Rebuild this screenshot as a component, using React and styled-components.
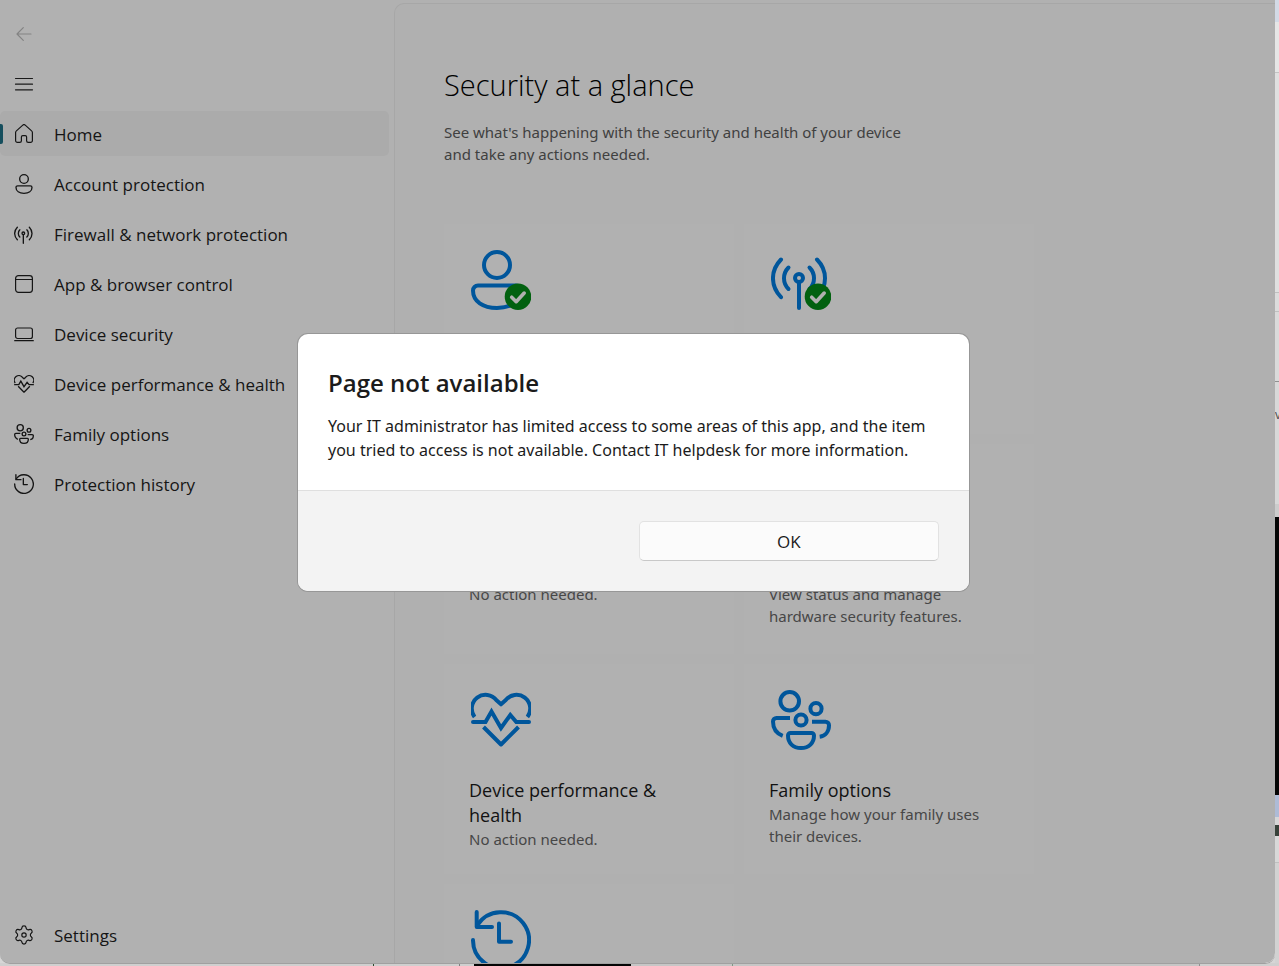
import React from "react";
import styled, { createGlobalStyle } from "styled-components";

const GlobalStyle = createGlobalStyle`
  * {
    box-sizing: border-box;
  }

  body {
    margin: 0;
    font-family: "Open Sans", "Noto Sans", sans-serif;
    color: #1b1b1b;
  }

  h1, h2, h3, p, ul {
    margin: 0;
    padding: 0;
  }
`;

const Desktop = styled.div`
  height: 100vh;
  display: grid;
  grid-template-columns: minmax(0, 1fr) 4px;
  grid-template-rows: minmax(0, 1fr) 3px;
  background: #d6d6d6;
  overflow: hidden;
`;

const AppWindow = styled.div`
  position: relative;
  display: grid;
  grid-template-columns: 394px minmax(0, 1fr);
  background: #fefefe;
  border-radius: 0 0 10px 10px;
  box-shadow: 0 1px 0 #a0a0a0;
  overflow: hidden;
`;

const EdgeColumn = styled.div`
  display: flex;
  flex-direction: column;
  overflow: hidden;
`;

const EdgeRow = styled.div`
  grid-column: 1 / -1;
  display: flex;
  overflow: hidden;
`;

const EdgePart = styled.div`
  flex: ${props => props.$size} 1 0;
  min-width: 0;
  min-height: 0;
  overflow: hidden;
  background: ${props => props.$color};
  color: #4a4a4a;
  font-size: 12px;
  line-height: 14px;
`;

const Sidebar = styled.nav`
  display: flex;
  flex-direction: column;
  gap: 5px;
  padding: 11px 5px 6px 0;
`;

const NavList = styled.ul`
  display: flex;
  flex-direction: column;
  gap: 5px;
  list-style: none;
`;

const Spacer = styled.div`
  flex: 1;
`;

const IconButton = styled.button`
  display: flex;
  align-items: center;
  width: 48px;
  height: 45px;
  padding: 0 14px;
  border: 0;
  background: none;
  color: ${props => (props.disabled ? "#bcbcbc" : "#262626")};
`;

const NavLink = styled.a`
  display: flex;
  align-items: center;
  gap: 20px;
  height: 45px;
  padding-left: ${props => (props.$active ? 0 : 14)}px;
  border-radius: 5px;
  background: ${props => (props.$active ? "#f5f5f5" : "none")};
  color: #1f1f1f;
  font-size: 17px;
  line-height: 24px;
  text-decoration: none;

  &::before {
    content: "";
    display: ${props => (props.$active ? "block" : "none")};
    width: 3px;
    height: 20px;
    margin-right: -9px;
    border-radius: 0 2px 2px 0;
    background: #1f7086;
  }
`;

const NavLabel = styled.span`
  padding-top: 2px;
`;

const Main = styled.main`
  margin-top: 3px;
  padding: 61px 49px 0;
  border: 1px solid #efefef;
  border-width: 1px 0 0 1px;
  border-top-left-radius: 10px;
  background: #fcfcfc;
  overflow: hidden;
`;

const PageTitle = styled.h1`
  color: #000;
  font-size: 29px;
  font-weight: 300;
  line-height: 40px;
`;

const PageIntro = styled.p`
  max-width: 480px;
  margin-top: 16px;
  color: #5c5c5c;
  font-family: "Noto Sans", sans-serif;
  font-size: 15px;
  line-height: 22px;
`;

const TileGrid = styled.div`
  display: grid;
  grid-template-columns: repeat(2, 290px);
  grid-auto-rows: 210px;
  gap: 10px;
  margin-top: 59px;
`;

const Tile = styled.section`
  padding: 24px 25px;
  background: #fefefe;
`;

const TileIcon = styled.div`
  height: 90px;
  padding: 2px;
  color: #007bdf;
`;

const TileTitle = styled.h2`
  font-size: 18px;
  font-weight: 400;
  line-height: 25px;
`;

const TileText = styled.p`
  color: #666;
  font-family: "Noto Sans", sans-serif;
  font-size: 15px;
  line-height: 22px;
`;

const Overlay = styled.div`
  position: absolute;
  inset: 0;
  display: flex;
  align-items: center;
  justify-content: center;
  padding: 0 8px 38px 0;
  background: rgba(0, 0, 0, 0.3);
`;

const Dialog = styled.div`
  width: 671px;
  border-radius: 10px;
  background: #fff;
  box-shadow: 0 0 0 1px #979797;
  overflow: hidden;
`;

const DialogBody = styled.div`
  padding: 32px 30px 28px;
`;

const DialogTitle = styled.h2`
  font-size: 24px;
  font-weight: 600;
  line-height: 34px;
`;

const DialogText = styled.p`
  margin-top: 14px;
  font-family: "Noto Sans", sans-serif;
  font-size: 16px;
  line-height: 24px;
`;

const DialogFooter = styled.div`
  display: grid;
  grid-template-columns: 1fr 1fr;
  gap: 10px;
  padding: 30px;
  border-top: 1px solid #dfdfdf;
  background: #f3f3f3;
`;

const OkButton = styled.button`
  grid-column: 2;
  height: 40px;
  border: 1px solid #e2e2e2;
  border-bottom-color: #c8c8c8;
  border-radius: 5px;
  background: #fbfbfb;
  color: #1b1b1b;
  font-family: inherit;
  font-size: 17px;
`;

const Drawing = ({ size, viewBox = "0 0 60 60", width = 4, children }) => (
  <svg
    width={size}
    height={size}
    viewBox={viewBox}
    fill="none"
    stroke="currentColor"
    strokeWidth={width}
    strokeLinecap="round"
    strokeLinejoin="round"
    aria-hidden="true"
  >
    {children}
  </svg>
);

const Badge = () => (
  <g>
    <circle cx="47" cy="46.7" r="13.3" fill="#048c17" stroke="none" />
    <path d="M40.7 47.2l4.5 4.5 8-8.6" stroke="#fdfdfd" strokeWidth="3.6" />
  </g>
);

const AccountIcon = ({ size, badge }) => (
  <Drawing size={size} viewBox={badge ? "0 0 60 60" : "-4 0 60 60"}>
    <circle cx="26" cy="15" r="13" />
    <path d="M7 35.5h38a5 5 0 0 1 5 5C50 51.5 40 58 26 58S2 51.5 2 40.5a5 5 0 0 1 5-5z" />
    {badge && <Badge />}
  </Drawing>
);

const NetworkIcon = ({ size, badge }) => (
  <Drawing size={size}>
    <circle cx="28" cy="28" r="4" />
    <path d="M28 33v25" />
    <path d="M10 9.5C-.7 20.5-.7 36 10 47.2M46 9.5C56.7 20.5 56.7 36 46 47.2" />
    <path d="M17.5 17.5c-6 6-6 15.5 0 21.5M38.5 17.5c6 6 6 15.5 0 21.5" />
    {badge && <Badge />}
  </Drawing>
);

const HeartIcon = ({ size }) => (
  <Drawing size={size} viewBox="0 -1 60 60">
    <path
      d="M3.6 26A13.7 13.7 0 0 1 25.5 9.3L30 13.3l4.5-4A13.7 13.7 0 0 1 56.4 26"
      strokeLinecap="butt"
    />
    <path d="M2 31h12.5l6-10.5L30 37l9.3-13 6 7H58" strokeLinejoin="miter" />
    <path d="M12.5 36L30 53.5 47.5 36" strokeLinecap="butt" />
  </Drawing>
);

const FamilyIcon = ({ size }) => (
  <Drawing size={size}>
    <circle cx="18.7" cy="11.3" r="9.3" />
    <circle cx="45" cy="18.7" r="5.6" />
    <circle cx="30" cy="30" r="5.6" />
    <path d="M19.5 43h21a2.5 2.5 0 0 1 2.5 2.5C43 53 38 58 30 58s-13-5-13-12.5a2.5 2.5 0 0 1 2.5-2.5z" />
    <path
      d="M19 28H5.5A3.5 3.5 0 0 0 2 31.5c0 6.5 3.5 12 9.7 14.3M41 31.7h13.5a3.5 3.5 0 0 1 3.5 3.5c0 6.3-3.5 10.8-9.3 11.5"
      strokeLinecap="butt"
    />
  </Drawing>
);

const HistoryIcon = ({ size }) => (
  <Drawing size={size}>
    <path d="M2 30A28 28 0 1 0 6.5 15" />
    <path d="M5.7 2v15H21" />
    <path d="M28 13.5v18.2h12" />
  </Drawing>
);

const HomeIcon = ({ size }) => (
  <Drawing size={size} viewBox="0 0 20 20" width={1.2}>
    <path d="M8.8 1.1L2.4 6.9a2.2 2.2 0 0 0-.8 1.7v8a1.8 1.8 0 0 0 1.8 1.8h2.4a1.6 1.6 0 0 0 1.6-1.6V13a1.4 1.4 0 0 1 1.4-1.4h2.4a1.4 1.4 0 0 1 1.4 1.4v3.8a1.6 1.6 0 0 0 1.6 1.6h2.4a1.8 1.8 0 0 0 1.8-1.8v-8a2.2 2.2 0 0 0-.8-1.7L11.2 1.1a1.8 1.8 0 0 0-2.4 0z" />
  </Drawing>
);

const BrowserIcon = ({ size }) => (
  <Drawing size={size} viewBox="0 0 20 20" width={1.2}>
    <rect x="1.6" y="1.6" width="16.8" height="16.8" rx="2.8" />
    <path d="M1.6 5.5h16.8" />
  </Drawing>
);

const LaptopIcon = ({ size }) => (
  <Drawing size={size} viewBox="0 0 20 20" width={1.2}>
    <rect x="1.6" y="4" width="16.8" height="10.5" rx="2" />
    <path d="M.7 16.7h18.6" />
  </Drawing>
);

const SettingsIcon = ({ size }) => (
  <Drawing size={size} viewBox="1 1 22 22" width={1.3}>
    <path d="M9.671 4.136a2.34 2.34 0 0 1 4.659 0 2.34 2.34 0 0 0 3.319 1.915 2.34 2.34 0 0 1 2.33 4.033 2.34 2.34 0 0 0 0 3.831 2.34 2.34 0 0 1-2.33 4.033 2.34 2.34 0 0 0-3.319 1.915 2.34 2.34 0 0 1-4.659 0 2.34 2.34 0 0 0-3.32-1.915 2.34 2.34 0 0 1-2.33-4.033 2.34 2.34 0 0 0 0-3.831A2.34 2.34 0 0 1 6.35 6.051a2.34 2.34 0 0 0 3.319-1.915" />
    <circle cx="12" cy="12" r="2.4" />
  </Drawing>
);

const navItems = [
  { label: "Home", Icon: HomeIcon, active: true },
  { label: "Account protection", Icon: AccountIcon },
  { label: "Firewall & network protection", Icon: NetworkIcon },
  { label: "App & browser control", Icon: BrowserIcon },
  { label: "Device security", Icon: LaptopIcon },
  { label: "Device performance & health", Icon: HeartIcon },
  { label: "Family options", Icon: FamilyIcon },
  { label: "Protection history", Icon: HistoryIcon }
];

const tiles = [
  { id: "account", Icon: AccountIcon, badge: true },
  { id: "network", Icon: NetworkIcon, badge: true },
  { id: "browser", title: "App & browser control", text: "No action needed.", Icon: BrowserIcon },
  { id: "device", title: "Device security", text: "View status and manage hardware security features.", Icon: LaptopIcon },
  { id: "health", title: "Device performance & health", text: "No action needed.", Icon: HeartIcon },
  { id: "family", title: "Family options", text: "Manage how your family uses their devices.", Icon: FamilyIcon },
  { id: "history", Icon: HistoryIcon }
];

// slices of the window behind, [size, colour, text]
const rightEdge = [
  [22, "#d3dae6"],
  [50, "#e6e6e6"],
  [1, "#c4c4c4"],
  [219, "#e0e0e0"],
  [1, "#c0c0c0"],
  [18, "#dcdcdc"],
  [1, "#c0c0c0"],
  [69, "#dadada"],
  [1, "#909090"],
  [26, "#d8d8d8"],
  [14, "#d8d8d8", "v"],
  [82, "#d8d8d8"],
  [13, "#cccccc"],
  [278, "#050505"],
  [22, "#aebbd6"],
  [8, "#d6d6d6"],
  [11, "#38423a"],
  [26, "#d8d8d8"],
  [1, "#c0c0c0"],
  [100, "#d2d2d2"]
];

const bottomEdge = [
  [373, "#cfcfcf"],
  [1, "#2c4a2c"],
  [85, "#cfcfcf"],
  [1, "#808080"],
  [14, "#cfcfcf"],
  [157, "#050505"],
  [101, "#c6c6c6"],
  [1, "#7f9a85"],
  [466, "#c6c6c6"],
  [1, "#909090"],
  [79, "#cfcfcf"]
];

const App = () => (
  <>
    <GlobalStyle />
    <Desktop>
      <AppWindow>
        <Sidebar>
          <IconButton aria-label="Back" disabled>
            <Drawing size={20} viewBox="0 0 20 20" width={1.2}>
              <path d="M17 10H3M9.3 3.7L3 10l6.3 6.3" />
            </Drawing>
          </IconButton>
          <IconButton aria-label="Navigation">
            <Drawing size={20} viewBox="0 0 20 20" width={1.2}>
              <path d="M1.5 4.5h17M1.5 10.2h17M1.5 15.8h17" />
            </Drawing>
          </IconButton>
          <NavList>
            {navItems.map(({ label, Icon, active }) => (
              <li key={label}>
                <NavLink href="#" $active={active}>
                  <Icon size={20} />
                  <NavLabel>{label}</NavLabel>
                </NavLink>
              </li>
            ))}
          </NavList>
          <Spacer />
          <NavLink href="#">
            <SettingsIcon size={20} />
            <NavLabel>Settings</NavLabel>
          </NavLink>
        </Sidebar>
        <Main>
          <PageTitle>Security at a glance</PageTitle>
          <PageIntro>
            See what's happening with the security and health of your device
            and take any actions needed.
          </PageIntro>
          <TileGrid>
            {tiles.map(({ id, title, text, Icon, badge }) => (
              <Tile key={id}>
                <TileIcon>
                  <Icon size={60} badge={badge} />
                </TileIcon>
                {title && <TileTitle>{title}</TileTitle>}
                {text && <TileText>{text}</TileText>}
              </Tile>
            ))}
          </TileGrid>
        </Main>
        <Overlay>
          <Dialog role="dialog" aria-labelledby="dialog-title">
            <DialogBody>
              <DialogTitle id="dialog-title">Page not available</DialogTitle>
              <DialogText>
                Your IT administrator has limited access to some areas of this
                app, and the item
                <br />
                you tried to access is not available. Contact IT helpdesk for
                more information.
              </DialogText>
            </DialogBody>
            <DialogFooter>
              <OkButton>OK</OkButton>
            </DialogFooter>
          </Dialog>
        </Overlay>
      </AppWindow>
      <EdgeColumn>
        {rightEdge.map(([size, color, text], i) => (
          <EdgePart key={i} $size={size} $color={color}>
            {text}
          </EdgePart>
        ))}
      </EdgeColumn>
      <EdgeRow>
        {bottomEdge.map(([size, color], i) => (
          <EdgePart key={i} $size={size} $color={color} />
        ))}
      </EdgeRow>
    </Desktop>
  </>
);

export default App;
